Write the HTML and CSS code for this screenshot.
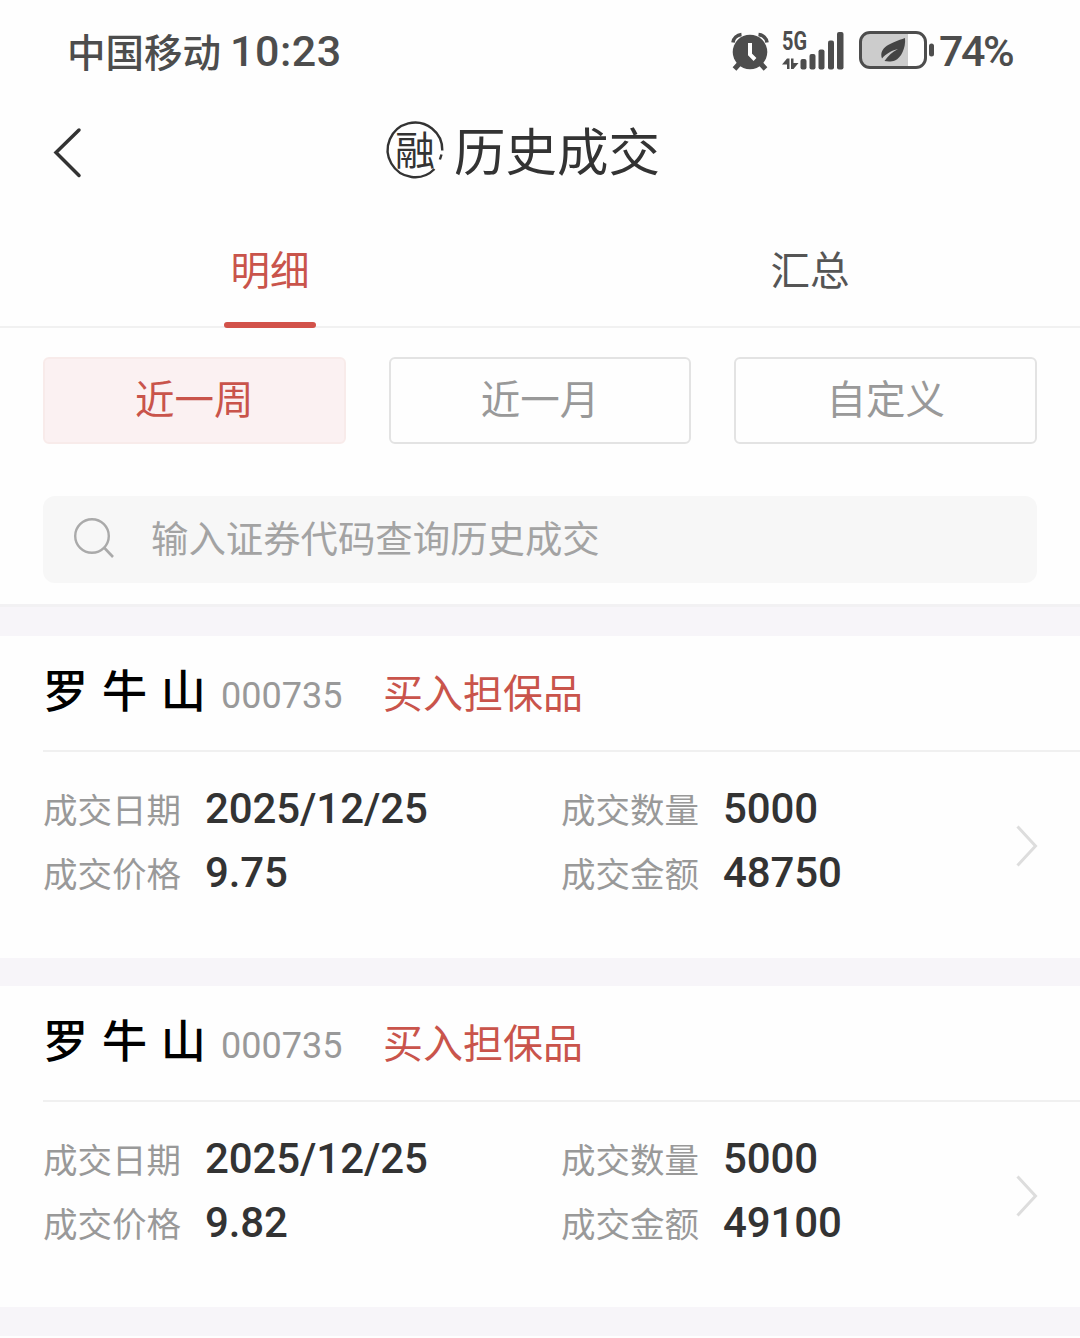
FILE: index.html
```
<!DOCTYPE html>
<html lang="zh-CN">
<head>
<meta charset="UTF-8">
<meta name="viewport" content="width=device-width, initial-scale=1.0">
<title>历史成交</title>
<link rel="stylesheet" href="styles.css">
</head>
<body>
  <!-- Status bar -->
  <div class="status-bar">
    <span class="carrier">中国移动</span>
    <span class="clock">10:23</span>
    <svg class="alarm-icon" width="38" height="38" viewBox="0 0 38 38">
      <circle cx="19" cy="20" r="17.300" fill="#4d4d4d"/>
      <path d="M2 10.500C2.500 6 6 3 10.500 2.500M36 10.500C35.500 6 32 3 27.500 2.500" fill="none" stroke="#4d4d4d" stroke-width="3.600"/>
      <path d="M8 32l-4.500 5M30 32l4.500 5" stroke="#4d4d4d" stroke-width="5"/>
      <path d="M19 11v11.500l5 5" fill="none" stroke="#fff" stroke-width="4"/>
    </svg>
    <svg class="signal-icon" width="62" height="40" viewBox="0 0 62 40">
      <text class="signal-text" x="0" y="19" textLength="25" lengthAdjust="spacingAndGlyphs">5G</text>
      <path d="M0 33.500l5-6h2.500V38H5v-4.500zM9 27.500h2.500V32H16.500l-5 6H9z" fill="#4d4d4d"/>
      <g fill="#4d4d4d">
        <rect x="18.500" y="28" width="6" height="10.500" rx="2"/>
        <rect x="27.500" y="23" width="6" height="15.500" rx="2"/>
        <rect x="36.500" y="18.500" width="6" height="20" rx="2"/>
        <rect x="46" y="9.500" width="6" height="29" rx="2"/>
        <rect x="55" y="1" width="6.500" height="37.500" rx="2"/>
      </g>
    </svg>
    <svg class="battery-icon" width="76" height="38" viewBox="0 0 76 38">
      <path d="M11 2h38v34H11a9 9 0 0 1-9-9V11a9 9 0 0 1 9-9z" fill="#ccc"/>
      <rect x="1.500" y="1.500" width="65" height="35" rx="9.500" fill="none" stroke="#4d4d4d" stroke-width="3"/>
      <rect x="70" y="12.500" width="5" height="13" rx="2.500" fill="#4d4d4d"/>
      <path d="M46 7C47 17 42 27 36 29.500C32 31 28 30.500 25.500 30C29 25 33 21 39 18C32 19.500 27 23 23 27.500C19.500 16 32 12 46 7z" fill="#444"/>
    </svg>
    <span class="battery-level">74%</span>
  </div>

  <!-- Page title -->
  <div class="header">
    <svg class="back-icon" width="32" height="52" viewBox="0 0 32 52">
      <path d="M27 4L4 26.500L27 49.500" fill="none" stroke="#333" stroke-width="3.500" stroke-linecap="round"/>
    </svg>
    <div class="title">
      <svg class="seal-icon" width="60" height="60" viewBox="0 0 60 60">
        <path d="M57.300 30.500A27.300 27.300 0 1 0 49.500 49" fill="none" stroke="#333" stroke-width="2.400"/>
        <path d="M56.500 34.500l-1.600 5" stroke="#333" stroke-width="2.400"/>
        <text class="seal-text" x="10" y="45">融</text>
      </svg>
      <h1>历史成交</h1>
    </div>
  </div>

  <div class="tabs">
    <div class="tab active">明细</div>
    <div class="tab">汇总</div>
  </div>

  <!-- Date range and search -->
  <div class="filters">
    <div class="range active">近一周</div>
    <div class="range">近一月</div>
    <div class="range">自定义</div>
  </div>
  <div class="search">
    <svg class="search-icon" width="42" height="42" viewBox="0 0 42 42">
      <circle cx="19" cy="19" r="16.800" fill="none" stroke="#aaa" stroke-width="2.400"/>
      <path d="M31 30.500L40 40" stroke="#aaa" stroke-width="2.600"/>
    </svg>
    <span>输入证券代码查询历史成交</span>
  </div>

  <!-- Deals -->
  <div class="deals">
    <div class="deal">
      <div class="deal-head">
        <span class="name">罗 牛 山</span>
        <span class="code">000735</span>
        <span class="action">买入担保品</span>
      </div>
      <div class="deal-body">
        <div class="fields">
          <div class="field"><span class="label">成交日期</span><span class="value">2025/12/25</span></div>
          <div class="field"><span class="label">成交数量</span><span class="value">5000</span></div>
          <div class="field"><span class="label">成交价格</span><span class="value">9.75</span></div>
          <div class="field"><span class="label">成交金额</span><span class="value">48750</span></div>
        </div>
        <svg class="arrow-icon" width="22" height="42" viewBox="0 0 22 42">
          <path d="M1.500 1.500L19.500 21L1.500 40.500" fill="none" stroke="#ddd" stroke-width="3"/>
        </svg>
      </div>
    </div>
    <div class="deal">
      <div class="deal-head">
        <span class="name">罗 牛 山</span>
        <span class="code">000735</span>
        <span class="action">买入担保品</span>
      </div>
      <div class="deal-body">
        <div class="fields">
          <div class="field"><span class="label">成交日期</span><span class="value">2025/12/25</span></div>
          <div class="field"><span class="label">成交数量</span><span class="value">5000</span></div>
          <div class="field"><span class="label">成交价格</span><span class="value">9.82</span></div>
          <div class="field"><span class="label">成交金额</span><span class="value">49100</span></div>
        </div>
        <svg class="arrow-icon" width="22" height="42" viewBox="0 0 22 42">
          <path d="M1.500 1.500L19.500 21L1.500 40.500" fill="none" stroke="#ddd" stroke-width="3"/>
        </svg>
      </div>
    </div>
  </div>
</body>
</html>
```
FILE: styles.css
```
* {
  box-sizing: border-box;
}
body {
  margin: 0;
  background-color: #fefefe;
  color: #333;
  font-family: "Noto Sans CJK SC", sans-serif;
  height: 1338px;
  overflow: hidden;
}
svg {
  display: block;
  flex-shrink: 0;
  overflow: visible;
}

/* Status bar */
.status-bar {
  display: flex;
  align-items: center;
  height: 102px;
  padding-left: 67px;
  color: #4d4d4d;
  line-height: 60px;
  white-space: nowrap;
}
.carrier {
  width: 163px;
  padding-bottom: 3px;
  font-size: 38.5px;
  font-weight: 500;
}
.clock {
  width: 501px;
  font-family: Roboto, sans-serif;
  font-size: 43px;
  font-weight: 500;
  letter-spacing: 0.5px;
}
.signal-icon {
  margin-left: 13px;
}
.signal-text {
  font-family: Roboto, sans-serif;
  font-size: 25px;
  font-weight: 700;
  fill: #4d4d4d;
}
.battery-icon {
  margin: 0 0 2px 15px;
}
.battery-level {
  margin-left: 4px;
  font-family: Roboto, sans-serif;
  font-size: 43px;
  font-weight: 500;
  letter-spacing: -2.4px;
}

/* Header */
.header {
  display: flex;
  align-items: center;
  height: 100px;
  padding-left: 52px;
}
.title {
  display: flex;
  align-items: center;
  margin-left: 301px;
  padding-bottom: 4px;
}
h1 {
  margin: 0 0 0 9px;
  padding-bottom: 2px;
  font-size: 51.5px;
  font-weight: 400;
  line-height: 60px;
}
.seal-text {
  font-size: 40px;
  fill: #333;
}

.tabs {
  display: flex;
  height: 126px;
  border-bottom: 2px solid #f1f1f1;
}
.tab {
  position: relative;
  flex: 1;
  padding-top: 36px;
  font-size: 39.5px;
  line-height: 60px;
  text-align: center;
  color: #555;
}
.tab.active {
  color: #c9544b;
}
.tab.active::after {
  content: "";
  position: absolute;
  left: 224px;
  bottom: -2px;
  width: 92px;
  height: 6px;
  border-radius: 3px;
  background-color: #d2524a;
}

/* Filters */
.filters {
  display: grid;
  grid-template-columns: repeat(3, 1fr);
  gap: 43px;
  padding: 29px 43px 0;
}
.range {
  height: 87px;
  border: 2px solid #e3e3e3;
  border-radius: 6px;
  font-size: 39.5px;
  line-height: 76px;
  text-align: center;
  color: #999;
}
.range.active {
  border-color: #f8ebea;
  background-color: #fbf1f2;
  color: #c9544b;
}
.search {
  display: flex;
  align-items: center;
  height: 87px;
  margin: 52px 43px 21px;
  padding: 0 0 4px 30px;
  border-radius: 12px;
  background-color: #f7f7f7;
  color: #a3a3a3;
  font-size: 37.4px;
  line-height: 60px;
}
.search span {
  margin-left: 36px;
  padding-bottom: 2px;
}

/* Deal list */
.deals {
  border-top: 3px solid #f2f1f3;
}
.deals::before {
  content: "";
  display: block;
  height: 29px;
  background-color: #f7f5f9;
}
.deal {
  height: 350px;
  border-bottom: 28px solid #f7f5f9;
}
.deal:last-child {
  border-bottom-width: 29px;
}
.deal-head {
  display: flex;
  align-items: baseline;
  height: 116px;
  margin-left: 43px;
  padding-top: 23px;
  border-bottom: 2px solid #f0f0f0;
  line-height: 60px;
}
.name {
  width: 178px;
  font-size: 45px;
  font-weight: 500;
  word-spacing: 3.8px;
  color: #000;
  white-space: nowrap;
}
.code {
  width: 162px;
  font-family: Roboto, sans-serif;
  font-size: 36px;
  color: #999;
}
.action {
  font-size: 40px;
  color: #c9544b;
}
.deal-body {
  display: flex;
  align-items: center;
  justify-content: space-between;
  padding: 24px 42px 0 43px;
}
.fields {
  display: grid;
  grid-template-columns: 518px 400px;
}
.field {
  display: flex;
  align-items: center;
  height: 64px;
}
.label {
  width: 162px;
  padding-bottom: 1px;
  font-size: 34.5px;
  color: #999;
}
.value {
  font-family: Roboto, sans-serif;
  font-size: 42px;
  font-weight: 500;
  letter-spacing: -0.1px;
}
.arrow-icon {
  margin-top: 12px;
}
```
